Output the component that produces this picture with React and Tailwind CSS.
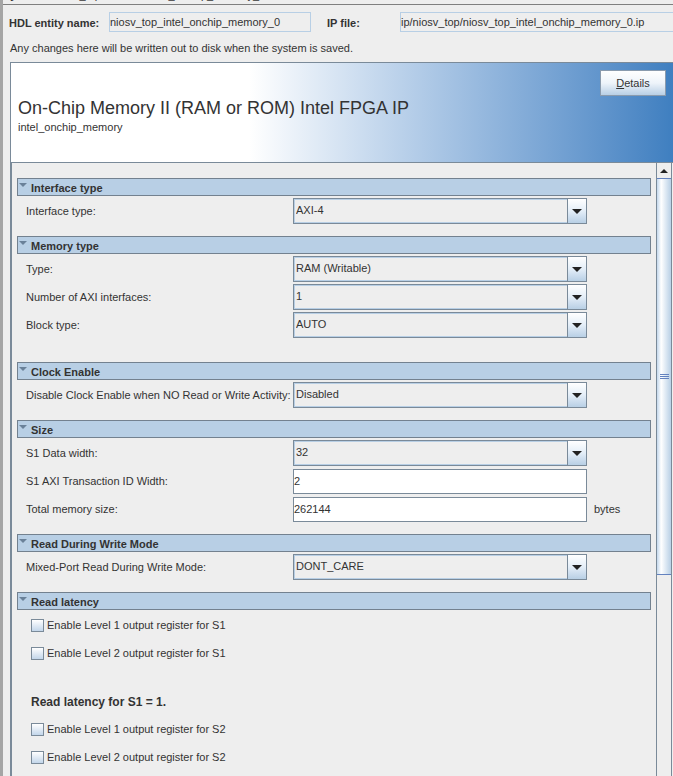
import React, { useId } from "react";

function Section({ title, className = "", children }) {
  return (
    <section className={className}>
      <h2 className="flex h-[18px] items-center border border-[#73818f] bg-[#b8cfe5] text-[11px] font-bold leading-[16px]">
        <button type="button" className="flex h-full w-full items-center text-left">
          <svg className="ml-px mb-1 h-[5px] w-[8px]" viewBox="0 0 8 5" aria-hidden="true">
            <path d="M0 0h8L4 4z" fill="#6a8199" />
          </svg>
          <span className="ml-1 pt-0.5">{title}</span>
        </button>
      </h2>
      {children}
    </section>
  );
}

function Row({ label, id, unit, children }) {
  return (
    <div className="flex h-7 items-center pl-[9px]">
      <label htmlFor={id} className="w-[267px] shrink-0 whitespace-nowrap">
        {label}
      </label>
      {children}
      {unit && <span className="ml-[7px]">{unit}</span>}
    </div>
  );
}

function SelectRow({ label, value }) {
  const id = useId();
  return (
    <Row label={label} id={id}>
      <div className="relative h-[26px] w-[294px]">
        <select
          id={id}
          defaultValue={value}
          className="block h-full w-full appearance-none border border-[#7a8a99] bg-[#eeeeee] pb-0.5 pl-0.5 text-[11px] shadow-[inset_1px_1px_0_#b8cfe5,inset_0_-1px_0_#b8cfe5] outline-none"
        >
          <option>{value}</option>
        </select>
        <span className="pointer-events-none absolute inset-y-0 right-0 flex w-5 items-center justify-center border border-[#7a8a99] bg-linear-to-b from-white via-[#e4eef8] to-[#b8cfe5]">
          <svg className="h-[5px] w-[10px]" viewBox="0 0 10 5" aria-hidden="true">
            <path d="M0 0h10L5 5z" fill="#222" />
          </svg>
        </span>
      </div>
    </Row>
  );
}

function TextRow({ label, value, unit }) {
  const id = useId();
  return (
    <Row label={label} id={id} unit={unit}>
      <input
        id={id}
        type="text"
        defaultValue={value}
        className="h-[25px] w-[294px] border border-[#7a8a99] bg-white text-[11px] outline-none"
      />
    </Row>
  );
}

function CheckRow({ label }) {
  return (
    <label className="flex h-7 items-center gap-[3px] pl-[14px]">
      <input
        type="checkbox"
        className="h-[13px] w-[13px] appearance-none border border-[#7a8a99] bg-linear-to-b from-white to-[#c3d6ea] checked:bg-[#7a8a99]"
      />
      {label}
    </label>
  );
}

function Scrollbar() {
  return (
    <div className="flex w-4 shrink-0 flex-col border-x border-[#7a8a99] bg-[#eeeeee]" aria-hidden="true">
      <div className="flex h-[15px] items-center justify-center">
        <svg className="h-[4px] w-[8px]" viewBox="0 0 8 4">
          <path d="M4 0l4 4H0z" fill="#222" />
        </svg>
      </div>
      <div className="flex h-[397px] flex-col items-center justify-center gap-px border-y border-[#6382bf] bg-linear-to-r from-[#c4d8ec] via-white via-30% to-[#b8cfe5]">
        <span className="h-px w-[9px] bg-[#6382bf]" />
        <span className="h-px w-[9px] bg-[#6382bf]" />
        <span className="h-px w-[9px] bg-[#6382bf]" />
      </div>
    </div>
  );
}

export default function App() {
  return (
    <div className="flex h-screen flex-col overflow-hidden border-l-[3px] border-[#a5a5a5] bg-[#eeeeee] font-['Liberation_Sans',Arial,sans-serif] text-[11px] leading-[14px] text-[#333333]">
      <div className="flex h-[5px] shrink-0 items-end gap-2 overflow-hidden border-b border-[#7f7f7f] pb-0.5 whitespace-nowrap">
        <b>System:</b>
        <span>niosv_top</span>
        <b className="ml-1">Path:</b>
        <span>intel_onchip_memory_0</span>
      </div>

      <div className="mt-[7px] flex h-5 shrink-0 items-center pl-[6px]">
        <label htmlFor="entity" className="w-[100px] shrink-0 pt-0.5 font-bold whitespace-nowrap">
          HDL entity name:
        </label>
        <input
          id="entity"
          readOnly
          defaultValue="niosv_top_intel_onchip_memory_0"
          className="h-5 w-[202px] shrink-0 border border-[#b8cfe5] bg-[#eeeeee] text-[11px] outline-none"
        />
        <label htmlFor="ipfile" className="ml-4 w-[73px] shrink-0 pt-0.5 font-bold whitespace-nowrap">
          IP file:
        </label>
        <input
          id="ipfile"
          readOnly
          defaultValue="ip/niosv_top/niosv_top_intel_onchip_memory_0.ip"
          className="h-5 min-w-0 flex-1 border border-r-0 border-[#b8cfe5] bg-[#eeeeee] text-[11px] outline-none"
        />
      </div>

      <p className="mt-[9px] shrink-0 pl-[7px]">
        Any changes here will be written out to disk when the system is saved.
      </p>

      <main className="mt-[7px] ml-[7px] flex min-h-0 flex-1 flex-col border-t border-l border-[#7a8a99]">
        <header className="flex h-[100px] shrink-0 items-start justify-between border-b border-[#7a8a99] bg-linear-to-r from-white from-36% to-[#3f7fc0] pl-[7px]">
          <div className="pt-[34px]">
            <h1 className="text-[18px] leading-[22px]">On-Chip Memory II (RAM or ROM) Intel FPGA IP</h1>
            <p className="mt-px">intel_onchip_memory</p>
          </div>
          <button
            type="button"
            className="mt-[7px] mr-[7px] h-[26px] w-[66px] border border-[#8a9bae] bg-linear-to-b from-white via-[#eef4fa] to-[#b8cfe5]"
          >
            <span className="underline">D</span>etails
          </button>
        </header>

        <div className="flex min-h-0 flex-1 border-l border-[#7a8a99]">
          <form className="min-w-0 flex-1 overflow-hidden pt-[15px] pr-[5px] pl-[5px]">
            <Section title="Interface type">
              <div className="pt-px">
                <SelectRow label="Interface type:" value="AXI-4" />
              </div>
            </Section>
            <Section title="Memory type" className="mt-[11px]">
              <div className="pt-px">
                <SelectRow label="Type:" value="RAM (Writable)" />
                <SelectRow label="Number of AXI interfaces:" value="1" />
                <SelectRow label="Block type:" value="AUTO" />
              </div>
            </Section>
            <Section title="Clock Enable" className="mt-[23px]">
              <div className="pt-px">
                <SelectRow label="Disable Clock Enable when NO Read or Write Activity:" value="Disabled" />
              </div>
            </Section>
            <Section title="Size" className="mt-[11px]">
              <div className="pt-px">
                <SelectRow label="S1 Data width:" value="32" />
                <TextRow label="S1 AXI Transaction ID Width:" value="2" />
                <TextRow label="Total memory size:" value="262144" unit="bytes" />
              </div>
            </Section>
            <Section title="Read During Write Mode" className="mt-[11px]">
              <div className="pt-px">
                <SelectRow label="Mixed-Port Read During Write Mode:" value="DONT_CARE" />
              </div>
            </Section>
            <Section title="Read latency" className="mt-[11px]">
              <div className="pt-px">
                <CheckRow label="Enable Level 1 output register for S1" />
                <CheckRow label="Enable Level 2 output register for S1" />
                <p className="mt-7 mb-[6px] pl-[14px] text-[12px] font-bold">Read latency for S1 = 1.</p>
                <CheckRow label="Enable Level 1 output register for S2" />
                <CheckRow label="Enable Level 2 output register for S2" />
              </div>
            </Section>
          </form>
          <Scrollbar />
          <div className="w-px shrink-0" />
        </div>
      </main>
    </div>
  );
}
